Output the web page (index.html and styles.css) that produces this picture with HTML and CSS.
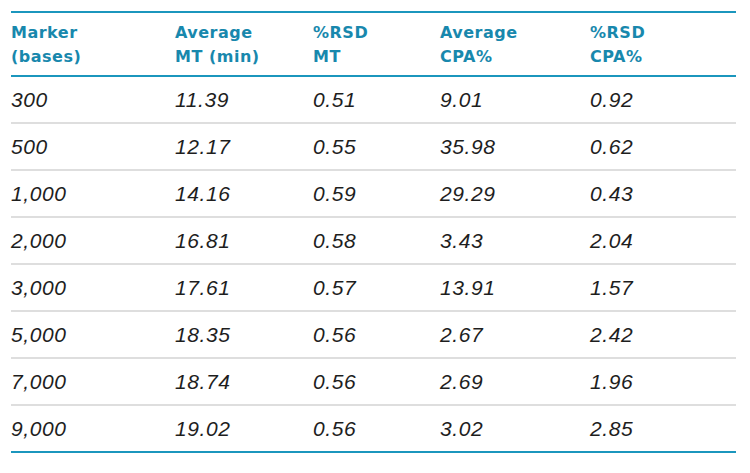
FILE: index.html
```html
<!DOCTYPE html>
<html lang="en">
<head>
<meta charset="utf-8">
<title>Marker table</title>
<link rel="stylesheet" href="styles.css">
</head>
<body>
<table class="data">
  <colgroup>
    <col class="c1"><col class="c2"><col class="c3"><col class="c4"><col class="c5">
  </colgroup>
  <thead>
    <tr>
      <th>Marker<br>(bases)</th>
      <th>Average<br>MT (min)</th>
      <th>%RSD<br>MT</th>
      <th>Average<br>CPA%</th>
      <th>%RSD<br>CPA%</th>
    </tr>
  </thead>
  <tbody>
    <tr><td>300</td><td>11.39</td><td>0.51</td><td>9.01</td><td>0.92</td></tr>
    <tr><td>500</td><td>12.17</td><td>0.55</td><td>35.98</td><td>0.62</td></tr>
    <tr><td>1,000</td><td>14.16</td><td>0.59</td><td>29.29</td><td>0.43</td></tr>
    <tr><td>2,000</td><td>16.81</td><td>0.58</td><td>3.43</td><td>2.04</td></tr>
    <tr><td>3,000</td><td>17.61</td><td>0.57</td><td>13.91</td><td>1.57</td></tr>
    <tr><td>5,000</td><td>18.35</td><td>0.56</td><td>2.67</td><td>2.42</td></tr>
    <tr><td>7,000</td><td>18.74</td><td>0.56</td><td>2.69</td><td>1.96</td></tr>
    <tr><td>9,000</td><td>19.02</td><td>0.56</td><td>3.02</td><td>2.85</td></tr>
  </tbody>
</table>
</body>
</html>
```
FILE: styles.css
```css
html, body {
  margin: 0;
  background: #ffffff;
}
body {
  padding: 11px;
}
.data {
  width: 725px;
  table-layout: fixed;
  border-collapse: collapse;
  border-top: 2px solid #1b96bd;
  border-bottom: 2px solid #1b96bd;
}
.c1 { width: 164px; }
.c2 { width: 138px; }
.c3 { width: 127px; }
.c4 { width: 150px; }
.c5 { width: 146px; }
.data th {
  text-align: left;
  vertical-align: top;
  font-family: "DejaVu Sans", Verdana, sans-serif;
  font-weight: bold;
  font-size: 16px;
  line-height: 24px;
  letter-spacing: 0.5px;
  color: #1888ad;
  padding: 8px 0 6px 0;
  border-bottom: 2px solid #1b96bd;
}
.data td {
  font-family: "Liberation Sans", Arial, sans-serif;
  font-style: italic;
  font-size: 21px;
  line-height: 24px;
  letter-spacing: 0.6px;
  color: #1e1e1e;
  padding: 11px 0 10px 0;
  border-bottom: 2px solid #dedede;
}
.data tbody tr:last-child td {
  border-bottom: none;
}
```
